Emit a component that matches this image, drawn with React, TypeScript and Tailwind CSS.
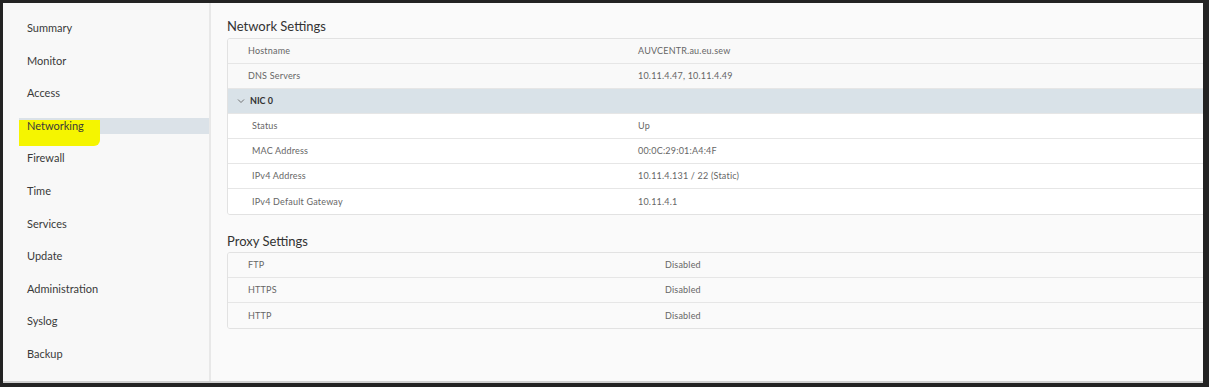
import React from 'react';

const navItems = ['Summary', 'Monitor', 'Access', 'Networking', 'Firewall', 'Time', 'Services', 'Update', 'Administration', 'Syslog', 'Backup'];

interface Row {
  label: string;
  value: string;
}

const dnsRows: Row[] = [
  { label: 'Hostname', value: 'AUVCENTR.au.eu.sew' },
  { label: 'DNS Servers', value: '10.11.4.47, 10.11.4.49' },
];

const nicRows: Row[] = [
  { label: 'Status', value: 'Up' },
  { label: 'MAC Address', value: '00:0C:29:01:A4:4F' },
  { label: 'IPv4 Address', value: '10.11.4.131 / 22 (Static)' },
  { label: 'IPv4 Default Gateway', value: '10.11.4.1' },
];

const proxyRows: Row[] = [
  { label: 'FTP', value: 'Disabled' },
  { label: 'HTTPS', value: 'Disabled' },
  { label: 'HTTP', value: 'Disabled' },
];

function Sidebar() {
  return (
    <div className="w-[208px] shrink-0 bg-[#f8f8f8] border-r-2 border-[#e8e8e8] pt-[9px]">
      {navItems.map((item) => (
        <div key={item} className="relative h-[32.6px] flex items-center">
          <div
            className={
              item === 'Networking'
                ? 'ml-[16px] flex-1 h-[16px] bg-[#dbe2e8] flex items-center pl-[8px]'
                : 'ml-[16px] flex-1 h-[16px] flex items-center pl-[8px]'
            }
          >
            {item === 'Networking' && (
              <div className="absolute left-[16px] top-[10px] w-[81px] h-[26px] bg-[#f5f500] rounded-br-[6px]" />
            )}
            <span className="relative text-[11px] text-[#3a3a3a]">{item}</span>
          </div>
        </div>
      ))}
    </div>
  );
}

function TableRow({ row, indent, valueX, bg }: { row: Row; indent: string; valueX: string; bg: string }) {
  return (
    <div className={`flex items-center h-[25px] border-b border-[#e6e6e6] last:border-b-0 ${bg}`}>
      <div className={`${valueX} shrink-0 ${indent} text-[9px] text-[#666] tracking-[0.2px]`}>{row.label}</div>
      <div className="text-[9px] text-[#666] tracking-[0.2px]">{row.value}</div>
    </div>
  );
}

export default function App() {
  return (
    <div className="w-[1209px] h-[387px] bg-[#232323] pt-[3px] pl-[3px] pr-[6px] pb-[4px]" style={{ fontFamily: 'Lato, "Open Sans", sans-serif' }}>
      <div className="flex h-full overflow-hidden border-b-2 border-[#cfcfcf]">
        <Sidebar />
        <div className="flex-1 bg-[#fafafa] pl-[16px] pt-[15px] overflow-hidden">
          <div className="text-[13px] text-[#333] leading-[16px] mb-[4px]">Network Settings</div>
          <div className="w-[1000px] border border-[#e2e2e2] rounded-[3px] overflow-hidden">
            {dnsRows.map((r) => (
              <TableRow key={r.label} row={r} indent="pl-[20px]" valueX="w-[410px]" bg="bg-[#f9f9f9]" />
            ))}
            <div className="flex items-center h-[25px] bg-[#d9e2e8] border-b border-[#e6e6e6] pl-[9px]">
              <svg width="8" height="8" viewBox="0 0 8 8" className="mr-[5px]">
                <path d="M1 2.5 L4 5.5 L7 2.5" fill="none" stroke="#666" strokeWidth="0.9" />
              </svg>
              <span className="text-[9px] font-bold text-[#333]">NIC 0</span>
            </div>
            {nicRows.map((r) => (
              <TableRow key={r.label} row={r} indent="pl-[24px]" valueX="w-[410px]" bg="bg-white" />
            ))}
          </div>
          <div className="text-[13px] text-[#333] leading-[16px] mt-[18px] mb-[3px]">Proxy Settings</div>
          <div className="w-[1000px] border border-[#e2e2e2] rounded-[3px] overflow-hidden">
            {proxyRows.map((r) => (
              <TableRow key={r.label} row={r} indent="pl-[20px]" valueX="w-[437px]" bg="bg-[#fafafa]" />
            ))}
          </div>
        </div>
      </div>
    </div>
  );
}
